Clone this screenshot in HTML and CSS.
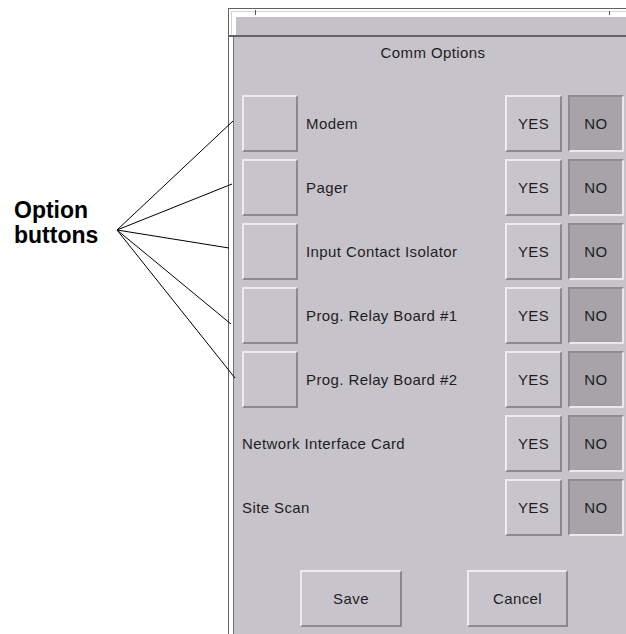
FILE: index.html
```html
<!DOCTYPE html>
<html lang="en">
<head>
  <meta charset="UTF-8" />
  <meta name="viewport" content="width=device-width, initial-scale=1.0"/>
  <title>Comm Options</title>
  <link rel="stylesheet" href="styles.css">
</head>
<body>
  <div class="page">
    <div class="callout">
      <div class="callout-label">Option<br>buttons</div>
    </div>

    <div class="window">
      <div class="window-top">
        <div class="frame-inner">
          <div class="title-bar"></div>
        </div>
      </div>

      <div class="panel">
        <div class="panel-title">Comm Options</div>

        <div class="rows">
          <div class="row">
            <button class="opt"></button>
            <span class="label">Modem</span>
            <button class="yes">YES</button>
            <button class="no">NO</button>
          </div>
          <div class="row">
            <button class="opt"></button>
            <span class="label">Pager</span>
            <button class="yes">YES</button>
            <button class="no">NO</button>
          </div>
          <div class="row">
            <button class="opt"></button>
            <span class="label">Input Contact Isolator</span>
            <button class="yes">YES</button>
            <button class="no">NO</button>
          </div>
          <div class="row">
            <button class="opt"></button>
            <span class="label">Prog. Relay Board #1</span>
            <button class="yes">YES</button>
            <button class="no">NO</button>
          </div>
          <div class="row">
            <button class="opt"></button>
            <span class="label">Prog. Relay Board #2</span>
            <button class="yes">YES</button>
            <button class="no">NO</button>
          </div>
          <div class="row plain">
            <span class="label">Network Interface Card</span>
            <button class="yes">YES</button>
            <button class="no">NO</button>
          </div>
          <div class="row plain">
            <span class="label">Site Scan</span>
            <button class="yes">YES</button>
            <button class="no">NO</button>
          </div>
        </div>

        <div class="actions">
          <button class="save">Save</button>
          <button class="cancel">Cancel</button>
        </div>
      </div>
    </div>

    <!-- leader lines from the callout to the option buttons -->
    <svg class="leaders" width="626" height="634" viewBox="0 0 626 634">
      <g stroke="#000" stroke-width="1" fill="none">
        <line x1="117" y1="230" x2="233" y2="121" />
        <line x1="117" y1="230" x2="232" y2="184" />
        <line x1="117" y1="230" x2="229" y2="248" />
        <line x1="117" y1="230" x2="231" y2="324" />
        <line x1="117" y1="230" x2="235" y2="378" />
      </g>
    </svg>
  </div>
</body>
</html>
```

FILE: styles.css
```css
body {
  margin: 0;
  background: #fff;
  font-family: "Liberation Sans", Arial, sans-serif;
  color: #1e1e1e;
}

.page {
  position: relative;
  display: flex;
  height: 634px;
  overflow: hidden;
}

.callout {
  width: 228px;
  flex: none;
  box-sizing: border-box;
  padding: 198px 0 0 14px;
}

.callout-label {
  font-size: 23px;
  font-weight: bold;
  line-height: 25px;
  color: #000;
}

.leaders {
  position: absolute;
  left: 0;
  top: 0;
  pointer-events: none;
}

/* window frame */
.window {
  position: relative;
  flex: 1;
  margin-top: 8px;
  border-top: 1px solid #626262;
  border-left: 1px solid #626262;
  display: flex;
  flex-direction: column;
  background: #fff;
}

.window::before,
.window::after {
  content: "";
  position: absolute;
  width: 1px;
  background: #555;
}

.window::before {
  left: 26px;
  top: 1px;
  height: 5px;
}

.window::after {
  left: 380px;
  top: 2px;
  height: 4px;
}

.window-top {
  padding: 2px 0 0 2px;
  border-bottom: 2px solid #66626a;
}

.frame-inner {
  border-top: 1px solid #d2d2d2;
  border-left: 1px solid #d2d2d2;
  padding: 5px 0 0 4px;
}

.title-bar {
  height: 18px;
  background: #c5c1c9;
}

.panel {
  flex: 1;
  margin-left: 4px;
  border-left: 1px solid #707070;
  background: #c7c3cb;
}

.panel-title {
  height: 32px;
  line-height: 32px;
  padding-left: 6px;
  text-align: center;
  font-size: 15px;
  letter-spacing: 0.4px;
}

.rows {
  margin-top: 26px;
  padding: 0 2px 0 8px;
  display: flex;
  flex-direction: column;
  gap: 7px;
}

.row {
  display: flex;
  align-items: center;
  height: 57px;
}

.label {
  flex: 1;
  margin-left: 8px;
  font-size: 15px;
  letter-spacing: 0.4px;
  white-space: nowrap;
}

.row.plain .label {
  margin-left: 0;
}

button {
  box-sizing: border-box;
  height: 57px;
  margin: 0;
  padding: 0;
  font-family: "Liberation Sans", Arial, sans-serif;
  font-size: 15px;
  letter-spacing: 0.4px;
  color: #1e1e1e;
  background: #c8c4cc;
  border: 2px solid;
  border-color: #eeeaf0 #8c888e #8c888e #eeeaf0;
}

.opt {
  width: 56px;
}

.yes {
  width: 57px;
}

.no {
  width: 56px;
  margin-left: 6px;
  background: #a7a3a9;
  border-color: #8e8a90 #ebe7ed #ebe7ed #8e8a90;
}

.actions {
  display: flex;
  gap: 65px;
  margin-top: 34px;
  padding-left: 66px;
}

.save {
  width: 102px;
}

.cancel {
  width: 101px;
}
```
